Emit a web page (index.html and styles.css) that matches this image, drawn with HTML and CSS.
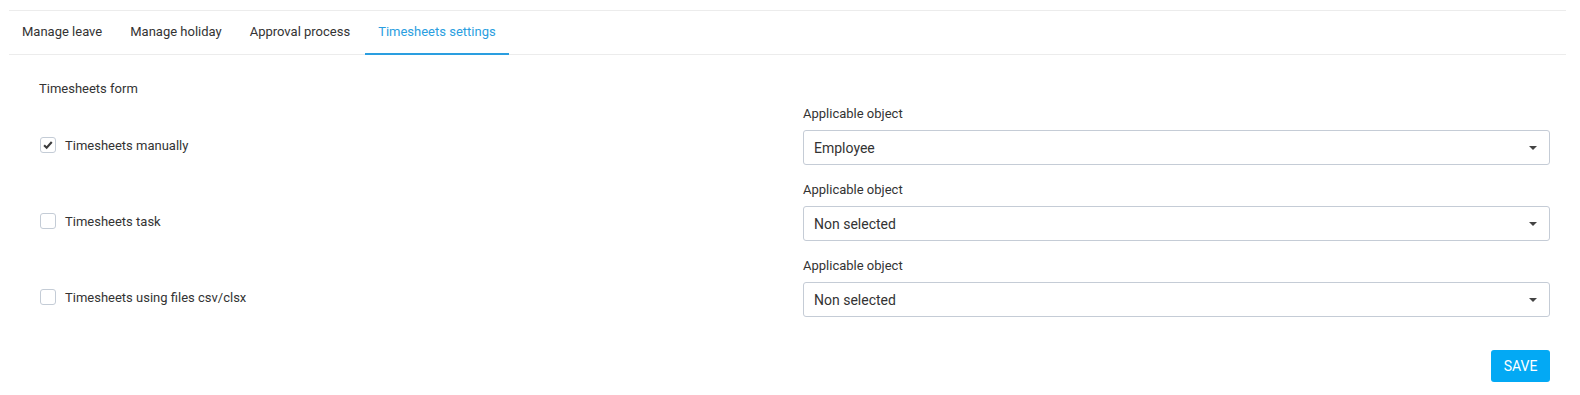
FILE: index.html
```html
<!DOCTYPE html>
<html lang="en">
<head>
<meta charset="UTF-8">
<title>Timesheets settings</title>
<link rel="stylesheet" href="styles.css">
</head>
<body>

<!-- TABS -->
<div class="tabs">
  <div class="tab">Manage leave</div>
  <div class="tab">Manage holiday</div>
  <div class="tab">Approval process</div>
  <div class="tab active">Timesheets settings</div>
</div>

<!-- FORM -->
<div class="settings">
  <div class="section-title">Timesheets form</div>

  <div class="row">
    <label class="check"><span class="box checked"><svg viewBox="0 0 16 16" width="16" height="16"><path d="M2.8 8.3l3.4 3.3 6.8-7.6" fill="none" stroke="#3d3d3d" stroke-width="2.8"/></svg></span>Timesheets manually</label>
    <div class="field">
      <div class="field-label">Applicable object</div>
      <div class="select">Employee<span class="caret"></span></div>
    </div>
  </div>

  <div class="row">
    <label class="check"><span class="box"></span>Timesheets task</label>
    <div class="field">
      <div class="field-label">Applicable object</div>
      <div class="select">Non selected<span class="caret"></span></div>
    </div>
  </div>

  <div class="row">
    <label class="check"><span class="box"></span>Timesheets using files csv/clsx</label>
    <div class="field">
      <div class="field-label">Applicable object</div>
      <div class="select">Non selected<span class="caret"></span></div>
    </div>
  </div>

  <div class="actions">
    <button class="btn-save">SAVE</button>
  </div>
</div>

</body>
</html>
```

FILE: styles.css
```css
/* -------- RESET -------- */
*{margin:0;padding:0;box-sizing:border-box}

body{
  font-family:Roboto,"Liberation Sans",sans-serif;
  font-size:13px;
  color:#333;
  background:#fff;
}

/* -------- TABS -------- */
.tabs{
  display:flex;
  gap:2px;
  margin:10px 14px 0 9px;
  height:45px;
  border-top:1px solid #ececec;
  border-bottom:1px solid #ececec;
}
.tab{
  padding:0 13px;
  display:flex;align-items:center;
  border-bottom:2px solid transparent;
  margin-bottom:-1px;
  padding-bottom:2px;
  cursor:pointer;
}
.tab.active{color:#2a9ee0;border-bottom-color:#2a9ee0}

/* -------- FORM -------- */
.settings{padding:26px 30px 0 39px}
.section-title{line-height:16px;margin-bottom:8px}

.row{
  display:grid;
  grid-template-columns:764px 1fr;
  margin-bottom:16px;
}
.check{
  align-self:end;
  height:35px;
  padding-bottom:5px;
  display:flex;align-items:center;gap:9px;
  padding-left:1px;
}
.box{
  width:16px;height:16px;
  border:1px solid #c4ccd6;
  border-radius:3px;
  display:flex;align-items:center;justify-content:center;
}
.box svg{width:12px;height:12px}

.field-label{line-height:17px;margin-bottom:8px}
.select{
  height:35px;
  border:1px solid #c5ccd6;
  border-radius:3px;
  padding:0 10px 0 10px;
  display:flex;align-items:center;justify-content:space-between;
  font-size:14px;
  color:#333;
}
.caret{
  width:0;height:0;
  border-left:4px solid transparent;
  border-right:4px solid transparent;
  border-top:4px solid #444;
  margin-right:2px;
}

.actions{display:flex;justify-content:flex-end;margin-top:33px}
.btn-save{
  width:59px;height:32px;
  border:none;border-radius:3px;
  background:#03a9f4;
  color:#fff;
  font-family:Roboto,"Liberation Sans",sans-serif;
  font-size:14px;
}
```
